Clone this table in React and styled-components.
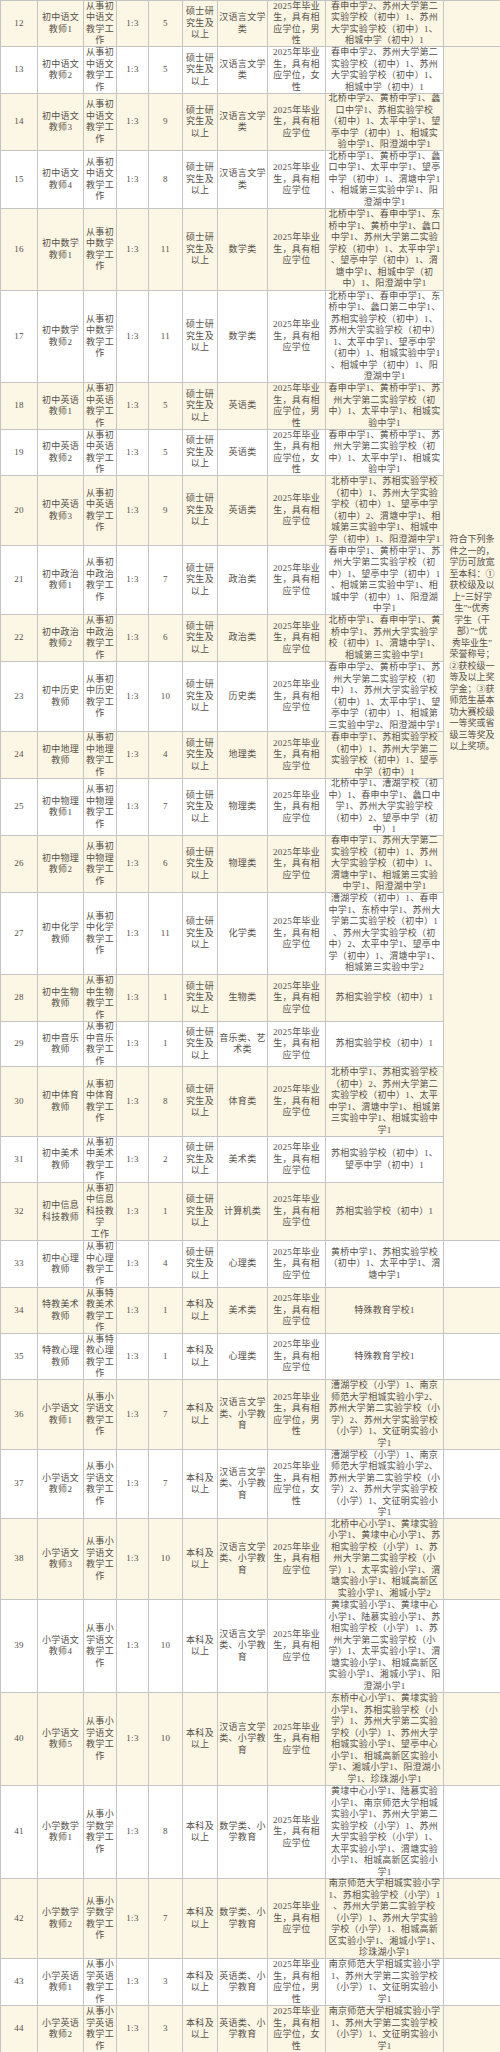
import React from "react"
import styled, { createGlobalStyle } from "styled-components"

const GlobalStyle = createGlobalStyle`
  html, body {
    margin: 0;
    padding: 0;
    background: #ffffff;
  }
`

const Table = styled.table`
  width: 500px;
  table-layout: fixed;
  border-collapse: collapse;
  font-family: "Liberation Serif", "Noto Sans CJK SC", serif;
  font-size: 9px;
  letter-spacing: 0.3px;
  line-height: 11.5px;
  color: #555049;
`

const Row = styled.tr`
  height: ${({ $h }) => $h}px;
  background: ${({ $cream }) => ($cream ? "#fcf6e4" : "#ffffff")};
`

const Cell = styled.td`
  border: 1px solid #c4c4c4;
  padding: 0 1px;
  text-align: center;
  vertical-align: middle;
  white-space: nowrap;
`

const NoteCell = styled(Cell)`
  background: #fcf6e4;
  letter-spacing: 0;
`

// the stack may run a few px into the borders, so the row keeps its set height
const Stack = styled.div`
  margin: -3px 0;
`

// one visual line of a cell, fixed height so mixed fonts don't grow the row
const Line = styled.span`
  display: block;
  height: 11.5px;
  line-height: 11.5px;
`

const Lines = ({ text }) => (
  <Stack>
    {String(text)
      .split("|")
      .map((line, i) => (
        <Line key={i}>{line}</Line>
      ))}
  </Stack>
)

const widths = [37, 46, 33, 32, 34, 35, 50, 58, 118, 57]

const MS = "硕士研|究生及|以上"
const BK = "本科及|以上"
const DEG = "2025年毕业|生，具有相|应学位"
const MALE = "2025年毕业|生，具有相|应学位，男|性"
const FEMALE = "2025年毕业|生，具有相|应学位，女|性"
const work = (a, b) => `从事${a}|${b}|教学工|作`

const SCH_YW12 = "春申中学2、苏州大学第二|实验学校（初中）1、苏州|大学实验学校（初中）1、|相城中学（初中）1"
const SCH_YY12 = "春申中学1、黄桥中学1、苏|州大学第二实验学校（初|中）1、太平中学1、相城实|验中学1"
const SCH_XY12 = "漕湖学校（小学）1、南京|师范大学相城实验小学2、|苏州大学第二实验学校（小|学）2、苏州大学实验学校|（小学）1、文征明实验小|学1"
const SCH_XE12 = "南京师范大学相城实验小学|1、苏州大学第二实验学校|（小学）1、文征明实验小|学1"
const HY = "汉语言文学|类"
const HYX = "汉语言文学|类、小学教|育"

const rows = [
  { no: 12, post: "初中语文|教师1", work: work("初", "中语文"), n: 5, edu: MS, major: HY, cond: MALE, sch: SCH_YW12, h: 46 },
  { no: 13, post: "初中语文|教师2", work: work("初", "中语文"), n: 5, edu: MS, major: HY, cond: FEMALE, sch: SCH_YW12, h: 47 },
  { no: 14, post: "初中语文|教师3", work: work("初", "中语文"), n: 9, edu: MS, major: HY, cond: DEG, sch: "北桥中学2、黄桥中学1、蠡|口中学1、苏相实验学校|（初中）1、太平中学1、望|亭中学（初中）1、相城实|验中学1、阳澄湖中学1", h: 57 },
  { no: 15, post: "初中语文|教师4", work: work("初", "中语文"), n: 8, edu: MS, major: HY, cond: DEG, sch: "北桥中学1、黄桥中学1、蠡|口中学1、太平中学1、望亭|中学（初中）1、渭塘中学1|、相城第三实验中学1、阳|澄湖中学1", h: 58 },
  { no: 16, post: "初中数学|教师1", work: work("初", "中数学"), n: 11, edu: MS, major: "数学类", cond: DEG, sch: "北桥中学1、春申中学1、东|桥中学1、黄桥中学1、蠡口|中学1、苏州大学第二实验|学校（初中）1、太平中学1|、望亭中学（初中）1、渭|塘中学1、相城中学（初|中）1、阳澄湖中学1", h: 82 },
  { no: 17, post: "初中数学|教师2", work: work("初", "中数学"), n: 11, edu: MS, major: "数学类", cond: DEG, sch: "北桥中学1、春申中学1、东|桥中学1、蠡口第二中学1、|苏相实验学校（初中）1、|苏州大学实验学校（初中）|1、太平中学1、望亭中学|（初中）1、相城实验中学1|、相城中学（初中）1、阳|澄湖中学1", h: 92 },
  { no: 18, post: "初中英语|教师1", work: work("初", "中英语"), n: 5, edu: MS, major: "英语类", cond: MALE, sch: SCH_YY12, h: 47 },
  { no: 19, post: "初中英语|教师2", work: work("初", "中英语"), n: 5, edu: MS, major: "英语类", cond: FEMALE, sch: SCH_YY12, h: 46 },
  { no: 20, post: "初中英语|教师3", work: work("初", "中英语"), n: 9, edu: MS, major: "英语类", cond: DEG, sch: "北桥中学1、苏相实验学校|（初中）1、苏州大学实验|学校（初中）1、望亭中学|（初中）2、渭塘中学1、相|城第三实验中学1、相城中|学（初中）1、阳澄湖中学1", h: 70 },
  { no: 21, post: "初中政治|教师1", work: work("初", "中政治"), n: 7, edu: MS, major: "政治类", cond: DEG, sch: "春申中学1、黄桥中学1、苏|州大学第二实验学校（初|中）1、望亭中学（初中）1|、相城第三实验中学1、相|城中学（初中）1、阳澄湖|中学1", h: 69 },
  { no: 22, post: "初中政治|教师2", work: work("初", "中政治"), n: 6, edu: MS, major: "政治类", cond: DEG, sch: "北桥中学1、春申中学1、黄|桥中学1、苏州大学实验学|校（初中）1、渭塘中学1、|相城第三实验中学1", h: 47 },
  { no: 23, post: "初中历史|教师", work: work("初", "中历史"), n: 10, edu: MS, major: "历史类", cond: DEG, sch: "春申中学2、黄桥中学1、苏|州大学第二实验学校（初|中）1、苏州大学实验学校|（初中）1、太平中学1、望|亭中学（初中）1、相城第|三实验中学2、阳澄湖中学1", h: 70 },
  { no: 24, post: "初中地理|教师", work: work("初", "中地理"), n: 4, edu: MS, major: "地理类", cond: DEG, sch: "春申中学1、苏相实验学校|（初中）1、苏州大学第二|实验学校（初中）1、望亭|中学（初中）1", h: 47 },
  { no: 25, post: "初中物理|教师1", work: work("初", "中物理"), n: 7, edu: MS, major: "物理类", cond: DEG, sch: "北桥中学1、漕湖学校（初|中）1、春申中学1、蠡口中|学1、苏州大学实验学校|（初中）2、望亭中学（初|中）1", h: 57 },
  { no: 26, post: "初中物理|教师2", work: work("初", "中物理"), n: 6, edu: MS, major: "物理类", cond: DEG, sch: "春申中学1、苏州大学第二|实验学校（初中）1、苏州|大学实验学校（初中）1、|渭塘中学1、相城第三实验|中学1、阳澄湖中学1", h: 57 },
  { no: 27, post: "初中化学|教师", work: work("初", "中化学"), n: 11, edu: MS, major: "化学类", cond: DEG, sch: "漕湖学校（初中）1、春申|中学1、东桥中学1、苏州大|学第二实验学校（初中）1|、苏州大学实验学校（初|中）2、太平中学1、望亭中|学（初中）1、渭塘中学1、|相城第三实验中学2", h: 82 },
  { no: 28, post: "初中生物|教师", work: work("初", "中生物"), n: 1, edu: MS, major: "生物类", cond: DEG, sch: "苏相实验学校（初中）1", h: 47 },
  { no: 29, post: "初中音乐|教师", work: work("初", "中音乐"), n: 1, edu: MS, major: "音乐类、艺|术类", cond: DEG, sch: "苏相实验学校（初中）1", h: 45 },
  { no: 30, post: "初中体育|教师", work: work("初", "中体育"), n: 8, edu: MS, major: "体育类", cond: DEG, sch: "北桥中学1、苏相实验学校|（初中）2、苏州大学第二|实验学校（初中）1、太平|中学1、渭塘中学1、相城第|三实验中学1、相城实验中|学1", h: 70 },
  { no: 31, post: "初中美术|教师", work: work("初", "中美术"), n: 2, edu: MS, major: "美术类", cond: DEG, sch: "苏相实验学校（初中）1、|望亭中学（初中）1", h: 46 },
  { no: 32, post: "初中信息|科技教师", work: "从事初|中信息|科技教|学|工作", n: 1, edu: MS, major: "计算机类", cond: DEG, sch: "苏相实验学校（初中）1", h: 58 },
  { no: 33, post: "初中心理|教师", work: work("初", "中心理"), n: 4, edu: MS, major: "心理类", cond: DEG, sch: "黄桥中学1、苏相实验学校|（初中）1、太平中学1、渭|塘中学1", h: 47 },
  { no: 34, post: "特教美术|教师", work: work("特", "教美术"), n: 1, edu: BK, major: "美术类", cond: DEG, sch: "特殊教育学校1", h: 46 },
  { no: 35, post: "特教心理|教师", work: work("特", "教心理"), n: 1, edu: BK, major: "心理类", cond: DEG, sch: "特殊教育学校1", h: 46 },
  { no: 36, post: "小学语文|教师1", work: work("小", "学语文"), n: 7, edu: BK, major: HYX, cond: MALE, sch: SCH_XY12, h: 70 },
  { no: 37, post: "小学语文|教师2", work: work("小", "学语文"), n: 7, edu: BK, major: HYX, cond: FEMALE, sch: SCH_XY12, h: 69 },
  { no: 38, post: "小学语文|教师3", work: work("小", "学语文"), n: 10, edu: BK, major: HYX, cond: DEG, sch: "北桥中心小学1、黄埭实验|小学1、黄埭中心小学1、苏|相实验学校（小学）1、苏|州大学第二实验学校（小|学）1、太平实验小学1、渭|塘实验小学1、相城高新区|实验小学1、湘城小学2", h: 81 },
  { no: 39, post: "小学语文|教师4", work: work("小", "学语文"), n: 10, edu: BK, major: HYX, cond: DEG, sch: "黄埭实验小学1、黄埭中心|小学1、陆慕实验小学1、苏|相实验学校（小学）1、苏|州大学第二实验学校（小|学）1、太平实验小学1、渭|塘实验小学1、相城高新区|实验小学1、湘城小学1、阳|澄湖小学1", h: 93 },
  { no: 40, post: "小学语文|教师5", work: work("小", "学语文"), n: 10, edu: BK, major: HYX, cond: DEG, sch: "东桥中心小学1、黄埭实验|小学1、苏相实验学校（小|学）1、苏州大学第二实验|学校（小学）1、苏州大学|相城实验小学1、望亭中心|小学1、相城高新区实验小|学1、湘城小学1、阳澄湖小|学1、珍珠湖小学1", h: 93 },
  { no: 41, post: "小学数学|教师1", work: work("小", "学数学"), n: 8, edu: BK, major: "数学类、小|学教育", cond: DEG, sch: "黄埭中心小学1、陆慕实验|小学1、南京师范大学相城|实验小学1、苏州大学第二|实验学校（小学）1、苏州|大学实验学校（小学）1、|太平实验小学1、渭塘实验|小学1、相城高新区实验小|学1", h: 93 },
  { no: 42, post: "小学数学|教师2", work: work("小", "学数学"), n: 7, edu: BK, major: "数学类、小|学教育", cond: DEG, sch: "南京师范大学相城实验小学|1、苏相实验学校（小学）1|、苏州大学第二实验学校|（小学）1、苏州大学实验|学校（小学）1、相城高新|区实验小学1、湘城小学1、|珍珠湖小学1", h: 80 },
  { no: 43, post: "小学英语|教师1", work: work("小", "学英语"), n: 3, edu: BK, major: "英语类、小|学教育", cond: MALE, sch: SCH_XE12, h: 47 },
  { no: 44, post: "小学英语|教师2", work: work("小", "学英语"), n: 3, edu: BK, major: "英语类、小|学教育", cond: FEMALE, sch: SCH_XE12, h: 47 },
]

// the note spans rows 13 to 32
const NOTE_FROM = 13
const NOTE_TO = 32
const NOTE =
  "符合下列条|件之一的，|学历可放宽|至本科：①|获校级及以|上“三好学|生”“优秀|学生（干|部）”“优|秀毕业生”|荣誉称号；|②获校级一|等及以上奖|学金；③获|师范生基本|功大赛校级|一等奖或省|级三等奖及|以上奖项。"

const App = () => (
  <>
    <GlobalStyle />
    <Table>
      <colgroup>
        {widths.map((w, i) => (
          <col key={i} style={{ width: w }} />
        ))}
      </colgroup>
      <tbody>
        {rows.map((r) => (
          <Row key={r.no} $h={r.h} $cream={r.no % 2 === 0}>
            <Cell>{r.no}</Cell>
            <Cell><Lines text={r.post} /></Cell>
            <Cell><Lines text={r.work} /></Cell>
            <Cell>1:3</Cell>
            <Cell>{r.n}</Cell>
            <Cell><Lines text={r.edu} /></Cell>
            <Cell><Lines text={r.major} /></Cell>
            <Cell><Lines text={r.cond} /></Cell>
            <Cell><Lines text={r.sch} /></Cell>
            {r.no === NOTE_FROM && (
              <NoteCell rowSpan={NOTE_TO - NOTE_FROM + 1}>
                <Lines text={NOTE} />
              </NoteCell>
            )}
            {(r.no < NOTE_FROM || r.no > NOTE_TO) && <Cell />}
          </Row>
        ))}
      </tbody>
    </Table>
  </>
)

export default App
